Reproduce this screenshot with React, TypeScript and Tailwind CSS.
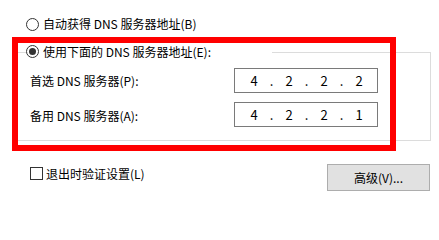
function Radio({ checked }: { checked?: boolean }) {
  return (
    <span className="flex h-[13px] w-[13px] shrink-0 items-center justify-center rounded-full border border-[#333333] bg-white">
      {checked && <span className="h-[7px] w-[7px] rounded-full bg-[#333333]" />}
    </span>
  )
}

function IpBox({ parts }: { parts: string[] }) {
  return (
    <div className="flex h-[25px] w-[144px] items-center border border-[#7a7a7a] bg-white pl-[9px] text-[13px] text-black">
      {parts.map((p, i) => (
        <div key={i} className="flex">
          {i > 0 && <span className="w-[15px] text-center">.</span>}
          <span className="w-[20px] text-center">{p}</span>
        </div>
      ))}
    </div>
  )
}

export default function App() {
  return (
    <div
      className="relative h-[207px] w-[439px] overflow-hidden bg-white text-[12px] leading-none text-black"
      style={{ fontFamily: '"Noto Sans CJK SC", "Noto Sans", sans-serif' }}
    >
      <div className="mt-[17px] flex h-[14px] items-center gap-[4px] pl-[26px]">
        <Radio />
        <span>自动获得 DNS 服务器地址(B)</span>
      </div>

      <div className="ml-[14px] mt-[21px] h-[89px] w-[417px] border border-[#dcdcdc]">
        <div className="ml-[11px] -mt-[8px] flex h-[13px] w-[246px] items-center gap-[4px] bg-white">
          <Radio checked />
          <span>使用下面的 DNS 服务器地址(E):</span>
        </div>

        <div className="mt-[10px] flex flex-col gap-[9px] pl-[15px]">
          <div className="flex items-center">
            <span className="flex-1 pt-[1px]">首选 DNS 服务器(P):</span>
            <div className="mr-[52px]">
              <IpBox parts={['4', '2', '2', '2']} />
            </div>
          </div>
          <div className="flex items-center">
            <span className="flex-1 pt-[3px]">备用 DNS 服务器(A):</span>
            <div className="mr-[52px]">
              <IpBox parts={['4', '2', '2', '1']} />
            </div>
          </div>
        </div>
      </div>

      <div className="mt-[23px] flex items-start pl-[30px]">
        <div className="mt-[3px] flex items-center gap-[3px]">
          <span className="h-[13px] w-[13px] border border-[#333333] bg-white" />
          <span>退出时验证设置(L)</span>
        </div>
        <button className="ml-auto mr-[9px] h-[27px] w-[103px] border border-[#adadad] bg-[#e1e1e1] text-[12px] text-black">
          高级(V)...
        </button>
      </div>

      {/* red highlight drawn over the dialog */}
      <div className="pointer-events-none absolute left-[12px] top-[37px] h-[114px] w-[384px] border-[6px] border-[#ff0000]" />
    </div>
  )
}
